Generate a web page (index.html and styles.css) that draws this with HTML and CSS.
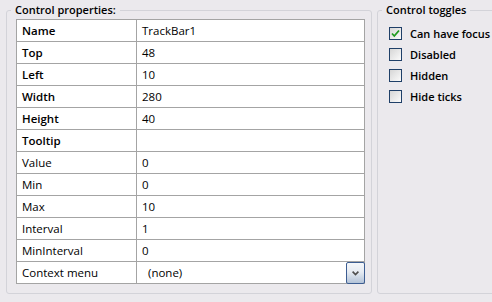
FILE: index.html
```html
<!DOCTYPE html>
<html>
<head>
<meta charset="utf-8">
<link rel="stylesheet" href="styles.css">
</head>
<body>
<div class="page">
  <fieldset class="group props">
    <legend>Control properties:</legend>
    <table class="grid">
      <colgroup><col class="c1"><col class="c2"></colgroup>
      <tr><td class="key strong">Name</td><td>TrackBar1</td></tr>
      <tr><td class="key strong">Top</td><td>48</td></tr>
      <tr><td class="key strong">Left</td><td>10</td></tr>
      <tr><td class="key strong">Width</td><td>280</td></tr>
      <tr><td class="key strong">Height</td><td>40</td></tr>
      <tr><td class="key strong">Tooltip</td><td></td></tr>
      <tr><td class="key">Value</td><td>0</td></tr>
      <tr><td class="key">Min</td><td>0</td></tr>
      <tr><td class="key">Max</td><td>10</td></tr>
      <tr><td class="key">Interval</td><td>1</td></tr>
      <tr><td class="key">MinInterval</td><td>0</td></tr>
      <tr><td class="key">Context menu</td><td class="combo-cell"><div class="combo"><span class="combo-text">(none)</span><span class="drop"><svg width="7" height="5" viewBox="0 0 7 5"><polyline points="0.6,0.6 3.5,3.6 6.4,0.6" fill="none" stroke="#4d4d4d" stroke-width="1.6"/></svg></span></div></td></tr>
    </table>
  </fieldset>
  <fieldset class="group toggles">
    <legend>Control toggles</legend>
    <ul class="checks">
      <li><span class="box"><svg width="11" height="11" viewBox="0 0 11 11"><polyline points="2,5.5 4.3,8 9,2.5" fill="none" stroke="#1f9a1f" stroke-width="1.8"/></svg></span>Can have focus</li>
      <li><span class="box"></span>Disabled</li>
      <li><span class="box"></span>Hidden</li>
      <li><span class="box"></span>Hide ticks</li>
    </ul>
  </fieldset>
</div>
</body>
</html>
```

FILE: styles.css
```css
html, body {
  margin: 0;
  padding: 0;
}
body {
  width: 492px;
  height: 302px;
  overflow: hidden;
  background: #ebe9ed;
  font-family: "Open Sans", "DejaVu Sans", sans-serif;
  font-size: 11.5px;
  color: #000;
}
.page {
  display: flex;
  gap: 5px;
  padding-left: 6px;
}
.group {
  margin: 3px 0 0 0;
  padding: 0;
  border: 1px solid #d3d3d9;
  border-radius: 3px;
  box-sizing: border-box;
  height: 291px;
  min-width: 0;
  flex: none;
}
.group legend {
  font-size: 11px;
  font-weight: 600;
  line-height: 14px;
  padding: 0 4px;
  margin-left: 4px;
  color: #000;
}
.props {
  width: 366px;
}
.toggles {
  width: 130px;
}
.grid {
  border-collapse: collapse;
  table-layout: fixed;
  width: 349px;
  margin: 2px 0 0 9px;
  background: #fff;
}
.grid col.c1 { width: 120px; }
.grid td {
  border: 1px solid #a4a4a4;
  height: 21px;
  padding: 0 0 0 5px;
  white-space: nowrap;
  vertical-align: middle;
}
.grid td.strong { font-weight: 600; }
.grid td.combo-cell {
  padding: 0;
}
.combo {
  display: flex;
  align-items: flex-start;
  height: 21px;
}
.combo-text {
  padding-left: 11px;
  line-height: 21px;
}
.drop {
  margin-left: auto;
  margin-right: -1px;
  width: 19px;
  height: 22px;
  box-sizing: border-box;
  border: 1px solid #3c5d92;
  border-radius: 2px;
  background: linear-gradient(#f5f7fa, #e6ebf2 45%, #b3c3d8);
  display: flex;
  justify-content: center;
  padding-top: 8px;
}
.drop svg { display: block; }
.checks {
  list-style: none;
  margin: 0;
  padding: 6px 0 0 11px;
}
.checks li {
  display: flex;
  align-items: center;
  height: 21px;
  gap: 8px;
  font-size: 11px;
  font-weight: 600;
  white-space: nowrap;
}
.box {
  width: 13px;
  height: 13px;
  box-sizing: border-box;
  border: 1px solid #1f3f68;
  background: linear-gradient(135deg, #d6d6d6, #fbfbfb);
  display: flex;
  align-items: center;
  justify-content: center;
  flex: none;
}
.box svg { display: block; }
```
